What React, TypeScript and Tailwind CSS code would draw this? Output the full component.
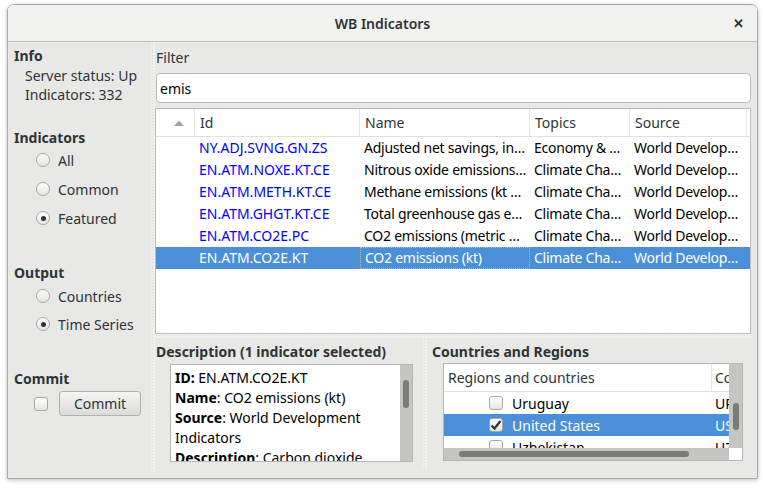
import React from "react";

const FONT = "font-['Noto_Sans',sans-serif]";

const Radio = ({ checked, label }: { checked?: boolean; label: string }) => (
  <div className="flex h-[24px] items-center pl-[28px]">
    <span className="flex h-[14px] w-[14px] items-center justify-center rounded-full border border-[#a7a7a5] bg-gradient-to-b from-white to-[#e4e4e2]">
      {checked && <span className="h-[5px] w-[5px] rounded-full bg-[#2e3436]" />}
    </span>
    <span className="ml-[8px] text-[#2e3436]">{label}</span>
  </div>
);

const Check = ({ checked }: { checked?: boolean }) => (
  <span className="flex h-[14px] w-[14px] shrink-0 items-center justify-center rounded-[3px] border border-[#a7a7a5] bg-gradient-to-b from-white to-[#e4e4e2]">
    {checked && (
      <svg width="12" height="12" viewBox="0 0 12 12">
        <path d="M1.5 6.5 L4.5 9.5 L10.5 2" fill="none" stroke="#2e3436" strokeWidth="2.2" />
      </svg>
    )}
  </span>
);

const rows = [
  ["NY.ADJ.SVNG.GN.ZS", "Adjusted net savings, in…", "Economy & …", "World Develop…"],
  ["EN.ATM.NOXE.KT.CE", "Nitrous oxide emissions…", "Climate Cha…", "World Develop…"],
  ["EN.ATM.METH.KT.CE", "Methane emissions (kt …", "Climate Cha…", "World Develop…"],
  ["EN.ATM.GHGT.KT.CE", "Total greenhouse gas e…", "Climate Cha…", "World Develop…"],
  ["EN.ATM.CO2E.PC", "CO2 emissions (metric …", "Climate Cha…", "World Develop…"],
  ["EN.ATM.CO2E.KT", "CO2 emissions (kt)", "Climate Cha…", "World Develop…"],
];

const dots =
  "bg-[#efefee] bg-[radial-gradient(circle,#d9d9d7_0.8px,transparent_0.9px)] bg-[length:3px_3px]";

export default function App() {
  return (
    <div className={`h-[488px] w-[764px] bg-white pl-[7px] pt-[4px] text-[14px] text-[#2e3436] ${FONT}`}>
      <div className="flex h-[475px] w-[751px] flex-col overflow-hidden rounded-t-[7px] border border-[#a9a9a7] shadow-[0_1px_4px_rgba(0,0,0,0.25)]">
        {/* title bar */}
        <div className="relative flex h-[37px] shrink-0 items-center justify-center border-b border-[#bfbfbd] bg-[#f1f1f0]">
          <span className="text-[14px] font-semibold text-[#2e3436]">WB Indicators</span>
          <span className="absolute right-[13px] top-[9px] text-[13px] font-bold text-[#2e3436]">✕</span>
        </div>

        <div className="flex min-h-0 flex-1 bg-[#e8e8e7]">
          {/* left controls */}
          <div className="flex w-[143px] shrink-0 flex-col pl-[6px]">
            <div className="flex h-[24px] items-center pt-[2px] font-bold">Info</div>
            <div className="pl-[11px] leading-[19px]">
              <div>Server status: Up</div>
              <div>Indicators: 332</div>
            </div>

            <div className="mt-[22px] flex h-[22px] items-center font-bold">Indicators</div>
            <div className="flex flex-col gap-[5px] -ml-[6px]">
              <Radio label="All" />
              <Radio label="Common" />
              <Radio checked label="Featured" />
            </div>

            <div className="mt-[31px] flex h-[22px] items-center font-bold">Output</div>
            <div className="mt-[1px] flex flex-col gap-[4px] -ml-[6px]">
              <Radio label="Countries" />
              <Radio checked label="Time Series" />
            </div>

            <div className="mt-[31px] flex h-[22px] items-center font-bold">Commit</div>
            <div className="mt-[2px] flex items-center pl-[20px]">
              <Check />
              <button className="ml-[11px] h-[25px] w-[82px] rounded-[3px] border border-[#b0b0ae] bg-gradient-to-b from-[#f4f4f3] to-[#dcdcda] text-[#2e3436]">
                Commit
              </button>
            </div>
          </div>

          {/* vertical splitter */}
          <div className={`w-[4px] shrink-0 ${dots} mb-[5px]`} />

          {/* main area */}
          <div className="flex min-w-0 flex-1 flex-col pr-[6px]">
            <div className="flex h-[31px] shrink-0 items-center pl-[1px]">Filter</div>
            <div className="ml-[1px] flex h-[30px] shrink-0 items-center rounded-[4px] border border-[#bcbcba] bg-white pl-[3px] text-[#000]">
              emis
            </div>

            {/* indicator table */}
            <div className="mt-[5px] h-[226px] shrink-0 border border-[#bcbcba] bg-white">
              <div className="flex h-[28px] border-b border-[#e0e0de] text-[#2e3436]">
                <div className="flex w-[39px] items-center justify-end border-r border-[#e6e6e4] pr-[10px]">
                  <svg width="10" height="6" viewBox="0 0 10 6">
                    <path d="M0 6 L5 0.5 L10 6 Z" fill="#a5a5a3" />
                  </svg>
                </div>
                <div className="flex w-[165px] items-center border-r border-[#e6e6e4] pl-[5px]">Id</div>
                <div className="flex w-[170px] items-center border-r border-[#e6e6e4] pl-[5px]">Name</div>
                <div className="flex w-[100px] items-center border-r border-[#e6e6e4] pl-[5px]">Topics</div>
                <div className="flex w-[117px] items-center border-r border-[#e6e6e4] pl-[5px]">Source</div>
              </div>
              {rows.map((r, i) => {
                const sel = i === rows.length - 1;
                return (
                  <div
                    key={r[0]}
                    className={`flex h-[22px] items-center whitespace-nowrap pb-[2px] ${sel ? "bg-[#4a8fd8] text-white" : "text-[#000]"}`}
                  >
                    <div className="w-[39px]" />
                    <div className={`w-[165px] overflow-hidden pl-[4px] ${sel ? "" : "text-[#0000ff]"}`}>{r[0]}</div>
                    <div
                      className={`flex h-[22px] w-[170px] items-center overflow-hidden pl-[4px] tracking-[-0.25px] ${sel ? "-mb-[2px] border border-dotted border-[#c9b98a] pb-[2px]" : ""}`}
                    >
                      {r[1]}
                    </div>
                    <div className="w-[100px] overflow-hidden pl-[4px] tracking-[-0.25px]">{r[2]}</div>
                    <div className="w-[117px] overflow-hidden pl-[4px] tracking-[-0.25px]">{r[3]}</div>
                  </div>
                );
              })}
            </div>

            {/* horizontal splitter */}
            <div className={`h-[4px] shrink-0 ${dots}`} />

            {/* lower panes */}
            <div className="flex min-h-0 flex-1 pb-[9px]">
              <div className="flex w-[268px] shrink-0 flex-col">
                <div className="flex h-[26px] shrink-0 items-center pl-[1px] pt-[1px] font-bold">
                  Description (1 indicator selected)
                </div>
                <div className="ml-[15px] mr-[10px] flex h-[98px] overflow-hidden border border-[#b6b6b4] bg-white">
                  <div className="flex-1 overflow-hidden pl-[4px] pt-[3px] leading-[20px] text-[#000]">
                    <div><b>ID:</b> EN.ATM.CO2E.KT</div>
                    <div><b>Name</b>: CO2 emissions (kt)</div>
                    <div><b>Source</b>: World Development Indicators</div>
                    <div><b>Description</b>: Carbon dioxide</div>
                  </div>
                  <div className="w-[12px] shrink-0 bg-[#c5c5c3] pt-[15px]">
                    <div className="mx-auto h-[28px] w-[6px] rounded-full bg-[#7b7b79]" />
                  </div>
                </div>
              </div>

              <div className={`w-[4px] shrink-0 ${dots}`} />

              <div className="flex min-w-0 flex-1 flex-col">
                <div className="flex h-[25px] shrink-0 items-center pl-[5px] pt-[1px] font-bold">Countries and Regions</div>
                <div className="ml-[16px] mr-[8px] flex h-[98px] flex-col overflow-hidden border border-[#b6b6b4] bg-white">
                  <div className="flex min-h-0 flex-1">
                    <div className="min-w-0 flex-1 overflow-hidden whitespace-nowrap">
                      <div className="flex h-[28px] border-b border-[#e0e0de]">
                        <div className="flex w-[268px] shrink-0 items-center border-r border-[#e6e6e4] pl-[4px]">
                          Regions and countries
                        </div>
                        <div className="flex items-center pl-[3px]">Co</div>
                      </div>
                      {[
                        ["Uruguay", "UR", false],
                        ["United States", "US", true],
                        ["Uzbekistan", "UZ", false],
                      ].map(([name, code, sel]) => (
                        <div
                          key={name as string}
                          className={`flex h-[22px] items-center ${sel ? "bg-[#4a8fd8] text-white" : "text-[#000]"}`}
                        >
                          <div className="flex w-[268px] shrink-0 items-center pl-[45px]">
                            <Check checked={sel as boolean} />
                            <span className="ml-[9px]">{name}</span>
                          </div>
                          <div className="pl-[3px]">{code}</div>
                        </div>
                      ))}
                    </div>
                    <div className="w-[13px] shrink-0 bg-[#c5c5c3] pt-[39px]">
                      <div className="mx-auto h-[27px] w-[6px] rounded-full bg-[#7b7b79]" />
                    </div>
                  </div>
                  <div className="flex h-[12px] shrink-0">
                    <div className="flex flex-1 items-center bg-[#c5c5c3] pl-[15px]">
                      <div className="h-[6px] w-[230px] rounded-full bg-[#7b7b79]" />
                    </div>
                    <div className="w-[13px] bg-white" />
                  </div>
                </div>
              </div>
            </div>
          </div>
        </div>
      </div>
    </div>
  );
}
